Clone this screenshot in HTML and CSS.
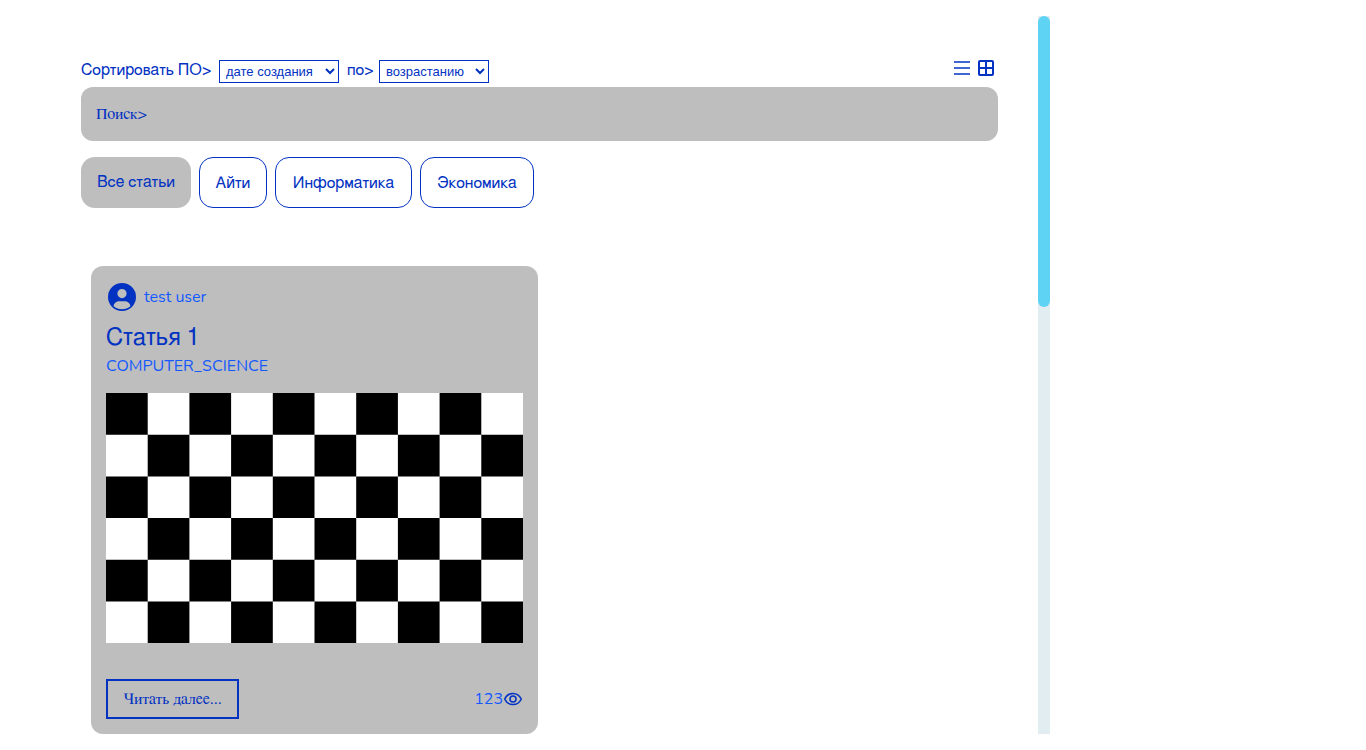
FILE: index.html
```html
<!DOCTYPE html>
<html lang="ru">
<head>
<meta charset="utf-8">
<title>Статьи</title>
<link rel="stylesheet" href="styles.css">
</head>
<body>
<div class="page">
  <main class="content">
    <div class="toolbar">
      <label class="toolbar-label" for="sort">Сортировать ПО&gt;</label>
      <select class="select select-field" id="sort"><option>дате создания</option><option>названию</option><option>просмотрам</option></select>
      <label class="toolbar-label toolbar-label-next" for="order">по&gt;</label>
      <select class="select select-order" id="order"><option>возрастанию</option><option>убыванию</option></select>
      <div class="views">
        <button class="icon-button icon-muted" type="button" aria-label="Список">
          <svg width="24" height="24" viewBox="0 0 24 24"><path d="M4 5h16v2H4zM4 11h16v2H4zM4 17h16v2H4z" fill="currentColor"/></svg>
        </button>
        <button class="icon-button" type="button" aria-label="Плитка">
          <svg width="24" height="24" viewBox="0 0 24 24"><path fill-rule="evenodd" d="M6 4h12a2 2 0 0 1 2 2v12a2 2 0 0 1-2 2H6a2 2 0 0 1-2-2V6a2 2 0 0 1 2-2zM6 6v5h5V6zM13 6v5h5V6zM6 13v5h5v-5zM13 13v5h5v-5z" fill="currentColor"/></svg>
        </button>
      </div>
    </div>
    <div class="search">
      <label class="search-label" for="search">Поиск&gt;</label>
      <input class="search-input" id="search" type="text">
    </div>
    <div class="tabs">
      <button class="tab tab-active" type="button">Все статьи</button>
      <button class="tab" type="button">Айти</button>
      <button class="tab" type="button">Информатика</button>
      <button class="tab" type="button">Экономика</button>
    </div>
    <div class="articles">
      <article class="card">
        <div class="author">
          <svg class="avatar" width="32" height="32" viewBox="0 0 32 32"><path fill-rule="evenodd" d="M16 2a14 14 0 1 0 0 28 14 14 0 0 0 0-28zM16 8a4.6 4.6 0 1 1 0 9.200 4.600 4.600 0 0 1 0-9.200zM7.600 25.200C8 21.800 10.500 20.200 13.500 20.200h5c3 0 5.500 1.600 5.900 5C22.200 27.200 19.300 28.200 16 28.200S9.800 27.200 7.600 25.200z" fill="currentColor"/></svg>
          <span>test user</span>
        </div>
        <h2 class="title">Статья 1</h2>
        <p class="category">COMPUTER_SCIENCE</p>
        <svg class="cover" viewBox="0 0 10 6" role="img" aria-label="Шахматная доска">
          <rect width="10" height="6" fill="#fff"/>
          <path d="M0 0h1v1H0zM2 0h1v1H2zM4 0h1v1H4zM6 0h1v1H6zM8 0h1v1H8zM1 1h1v1H1zM3 1h1v1H3zM5 1h1v1H5zM7 1h1v1H7zM9 1h1v1H9zM0 2h1v1H0zM2 2h1v1H2zM4 2h1v1H4zM6 2h1v1H6zM8 2h1v1H8zM1 3h1v1H1zM3 3h1v1H3zM5 3h1v1H5zM7 3h1v1H7zM9 3h1v1H9zM0 4h1v1H0zM2 4h1v1H2zM4 4h1v1H4zM6 4h1v1H6zM8 4h1v1H8zM1 5h1v1H1zM3 5h1v1H3zM5 5h1v1H5zM7 5h1v1H7zM9 5h1v1H9z"/>
        </svg>
        <div class="card-footer">
          <button class="read-more" type="button">Читать далее...</button>
          <span class="views-count">123<svg class="eye" width="20" height="20" viewBox="0 0 20 20" fill="none" stroke="currentColor" stroke-width="1.5"><path d="M1.700 10C3.400 6.400 6.500 4.400 10 4.400s6.600 2 8.300 5.600c-1.700 3.600-4.800 5.600-8.300 5.600S3.400 13.600 1.700 10z"/><circle cx="10" cy="10" r="3"/></svg></span>
        </div>
      </article>
    </div>
  </main>
  <div class="scroll-track"><div class="scroll-thumb"></div></div>
</div>
</body>
</html>
```
FILE: styles.css
```css
* { box-sizing: border-box; }
body {
  margin: 0;
  background: #fff;
  color: #0232c2;
  font: 16px/24px "FreeSans", "Nimbus Sans", "Liberation Sans", sans-serif;
  text-rendering: optimizeSpeed;
}
button, select, input { margin: 0; color: inherit; text-rendering: inherit; }
.page { display: flex; gap: 40px; padding: 16px 316px 16px 81px; }
.content { flex: 1; min-width: 0; padding-top: 40px; }
.toolbar { display: flex; align-items: center; height: 31px; }
.toolbar-label { min-width: 28px; margin-right: 4px; padding-bottom: 4px; }
.toolbar-label:first-child { min-width: 134px; }
.toolbar-label-next { margin-left: 8px; }
.select {
  height: 23px;
  padding: 0 2px;
  border: 1px solid #0232c2;
  border-radius: 0;
  background: transparent;
  font: 13px "Liberation Sans", sans-serif;
}
.select-field { width: 120px; }
.select-order { width: 110px; }
.views { display: flex; margin-left: auto; padding-bottom: 7px; }
.icon-button { display: flex; padding: 0; border: 0; background: none; }
.icon-muted { opacity: 0.75; }
.search {
  display: flex;
  align-items: center;
  padding: 15px;
  border-radius: 12px;
  background: #bebebe;
}
.search-label { font-family: "FreeSerif", "Nimbus Roman", "Liberation Serif", serif; }
.search-input { flex: 1; height: 24px; padding: 0; border: 0; background: none; outline: 0; font: inherit; }
.tabs { display: flex; gap: 8px; margin-top: 16px; }
.tab {
  height: 51px;
  padding: 0 15px;
  border: 1px solid #0232c2;
  border-radius: 14px;
  background: none;
  font: inherit;
}
.tab:nth-child(1) { min-width: 110px; }
.tab:nth-child(2) { min-width: 68px; }
.tab:nth-child(3) { min-width: 137px; }
.tab:nth-child(4) { min-width: 114px; }
.tab-active { border: 0; background: #bebebe; padding-bottom: 2px; }
.articles {
  display: grid;
  grid-template-columns: repeat(2, 1fr);
  gap: 3px;
  margin-top: 48px;
  padding: 10px 10px 0;
}
.card { padding: 15px; border-radius: 12px; background: #bebebe; }
.author { display: flex; align-items: center; gap: 6px; color: #1459ff; font-family: "Nunito", "Noto Sans", sans-serif; }
.avatar { color: #0232c2; }
.title { margin: 9px 0 0; font-size: 24px; line-height: 32px; font-weight: 400; }
.category { margin: 0; color: #1459ff; font-family: "Nunito", "Lato", sans-serif; }
.cover { display: block; width: 100%; margin-top: 15px; }
.card-footer { display: flex; align-items: center; justify-content: space-between; margin-top: 36px; }
.read-more {
  height: 40px;
  min-width: 133px;
  padding: 0 15px;
  border: 2px solid #0232c2;
  background: none;
  font: 16px "FreeSerif", "Nimbus Roman", "Liberation Serif", serif;
}
.views-count { display: flex; align-items: center; color: #1459ff; font-family: "Nunito", "Noto Sans", sans-serif; }
.eye { color: #0232c2; }
.scroll-track { width: 12px; background: #e2edf2; }
.scroll-thumb { height: 291px; border-radius: 6px; background: #5ed3f3; }
```
